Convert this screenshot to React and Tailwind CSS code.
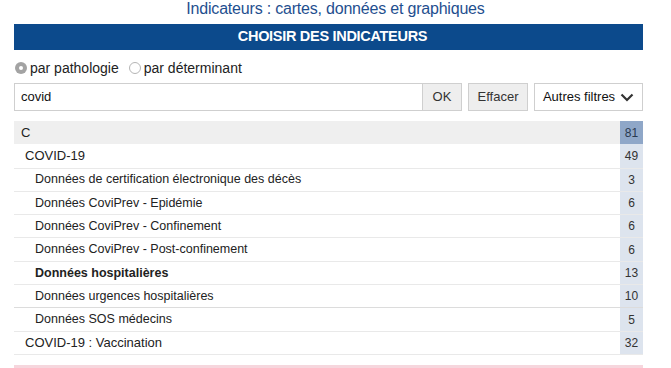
import React from "react";

const rows = [
  { label: "C", count: 81, level: 0 },
  { label: "COVID-19", count: 49, level: 1 },
  { label: "Données de certification électronique des décès", count: 3, level: 2, line: true },
  { label: "Données CoviPrev - Epidémie", count: 6, level: 2, line: true },
  { label: "Données CoviPrev - Confinement", count: 6, level: 2, line: true },
  { label: "Données CoviPrev - Post-confinement", count: 6, level: 2, line: true },
  { label: "Données hospitalières", count: 13, level: 2, line: true, bold: true },
  { label: "Données urgences hospitalières", count: 10, level: 2, line: true },
  { label: "Données SOS médecins", count: 5, level: 2, line: true, dark: true },
  { label: "COVID-19 : Vaccination", count: 32, level: 1, line: true },
];

const Radio = ({ checked }) =>
  checked ? (
    <span className="block w-[12px] h-[12px] rounded-full bg-[#a3a3a3] flex items-center justify-center">
      <span className="block w-[4px] h-[4px] rounded-full bg-white" />
    </span>
  ) : (
    <span className="block w-[12px] h-[12px] rounded-full border border-[#b5b5b5] bg-white" />
  );

export default function App() {
  return (
    <div className="w-[671px] h-[368px] overflow-hidden bg-white font-['Liberation_Sans',Arial,sans-serif] text-[#222]">
      <h1 className="h-[24px] text-center text-[16px] leading-[17px] text-[#1f4f8f] tracking-[-0.2px]">
        Indicateurs : cartes, données et graphiques
      </h1>
      <div className="ml-[14px] w-[629px]">
        <div className="h-[26px] bg-[#0c4a8c] flex items-center justify-center text-white font-bold text-[14.5px] tracking-[-0.3px] pl-[8px]">
          CHOISIR DES INDICATEURS
        </div>

        <div className="mt-[9px] h-[18px] flex items-center text-[14px] text-[#222]">
          <span className="ml-[1px]">
            <Radio checked />
          </span>
          <span className="ml-[3px]">par pathologie</span>
          <span className="ml-[10px]">
            <Radio />
          </span>
          <span className="ml-[3px]">par déterminant</span>
        </div>

        <div className="mt-[6px] flex items-stretch h-[28px] text-[13px]">
          <div className="w-[409px] border border-[#cfcfcf] flex items-center pl-[6px] text-[#111]">
            covid
          </div>
          <div className="w-[40px] -ml-px border border-[#cfcfcf] bg-[#eeeeee] flex items-center justify-center text-[#333]">
            OK
          </div>
          <div className="ml-[6px] w-[60px] border border-[#cfcfcf] bg-[#eeeeee] flex items-center justify-center text-[#333]">
            Effacer
          </div>
          <div className="ml-[6px] flex-1 border border-[#cfcfcf] bg-white flex items-center justify-center gap-[5px] text-[#111]">
            Autres filtres
            <svg width="14" height="9" viewBox="0 0 14 9">
              <polyline points="1.5,1.5 7,7 12.5,1.5" fill="none" stroke="#333" strokeWidth="2.2" />
            </svg>
          </div>
        </div>

        <div className="mt-[10px] text-[12.5px]">
          {rows.map((r) => (
            <div
              key={r.label}
              className={`flex h-[23.3px] ${
                r.level === 0 ? "bg-[#efefef]" : ""
              } ${r.line ? (r.dark ? "border-t border-[#dcdcdc]" : "border-t border-[#e9e9e9]") : ""}`}
            >
              <div
                className={`flex-1 flex items-center ${
                  r.level === 0 ? "pl-[7px]" : r.level === 1 ? "pl-[11px]" : "pl-[21px]"
                } ${r.bold ? "font-bold" : ""} ${r.level < 2 ? "text-[13px]" : ""}`}
              >
                {r.label}
              </div>
              <div
                className={`w-[23px] flex items-center justify-center text-[12px] ${
                  r.level === 0 ? "bg-[#8fa7c8] text-[#2a3a50]" : "bg-[#dde4ee] text-[#333]"
                }`}
              >
                {r.count}
              </div>
            </div>
          ))}
          <div className="border-t border-[#e9e9e9]" />
          <div className="mt-[10px] h-[4px] bg-[#f6d6dd]" />
        </div>
      </div>
    </div>
  );
}
